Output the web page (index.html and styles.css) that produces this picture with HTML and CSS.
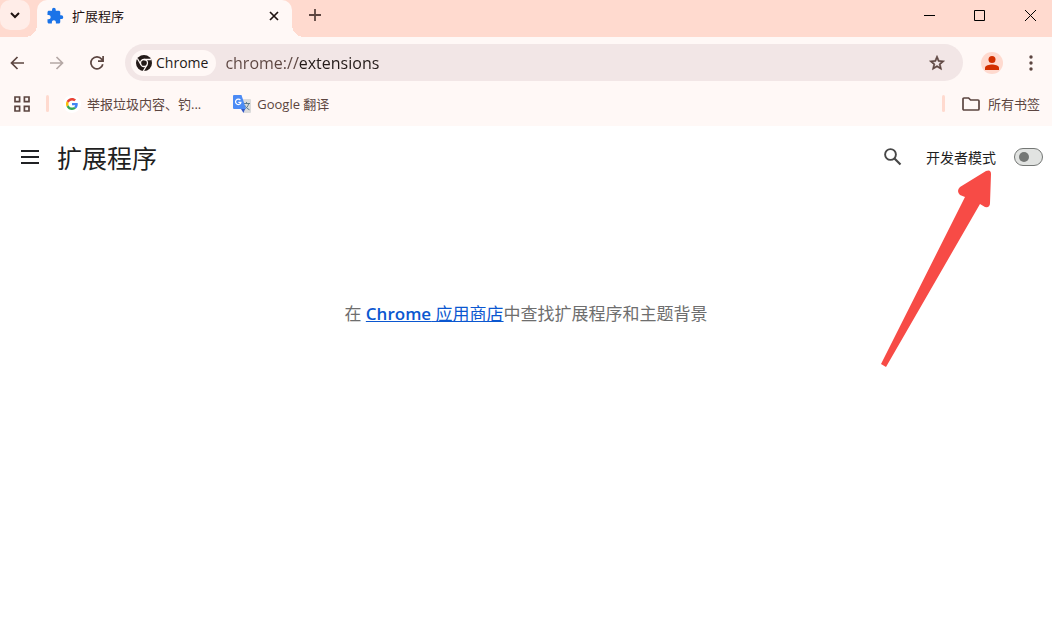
FILE: index.html
```html
<!DOCTYPE html>
<html lang="zh-CN">
<head>
    <meta charset="UTF-8">
    <meta name="viewport" content="width=device-width, initial-scale=1.0">
    <title>扩展程序</title>
    <link rel="stylesheet" href="styles.css">
</head>
<body>
    <!-- Tab strip -->
    <div class="tabstrip">
        <button class="tab-search" type="button" aria-label="搜索标签页">
            <svg width="12" height="12" viewBox="0 0 12 12"><path d="M2 4l4 4 4-4" fill="none" stroke="#1f1311" stroke-width="2"/></svg>
        </button>
        <div class="tab">
            <svg width="18" height="18" viewBox="0 0 24 24"><path fill="#1a73e8" d="M20.5 11H19V7c0-1.100-.9-2-2-2h-4V3.500a2.500 2.500 0 0 0-5 0V5H4c-1.100 0-1.990.9-1.990 2v3.800H3.500c1.490 0 2.700 1.210 2.700 2.700s-1.210 2.700-2.700 2.700H2V20c0 1.100.9 2 2 2h3.800v-1.500c0-1.490 1.210-2.700 2.700-2.700s2.700 1.210 2.700 2.700V22H17c1.100 0 2-.9 2-2v-4h1.500a2.500 2.500 0 0 0 0-5z"/></svg>
            <span class="tab-title">扩展程序</span>
            <button class="icon-button tab-close" type="button" aria-label="关闭">
                <svg width="10" height="10" viewBox="0 0 10 10"><path d="M1 1l8 8M9 1L1 9" stroke="#1f1311" stroke-width="1.700"/></svg>
            </button>
        </div>
        <button class="icon-button new-tab" type="button" aria-label="新标签页">
            <svg width="12" height="12" viewBox="0 0 12 12"><path d="M6 0v12M0 6h12" stroke="#5c4540" stroke-width="1.800"/></svg>
        </button>
        <div class="window-controls">
            <button type="button" aria-label="最小化">
                <svg width="11" height="11" viewBox="0 0 11 11"><path d="M0 5.500h11" stroke="#000"/></svg>
            </button>
            <button type="button" aria-label="最大化">
                <svg width="11" height="11" viewBox="0 0 11 11"><path d="M.5.5h10v10H.5z" fill="none" stroke="#000"/></svg>
            </button>
            <button type="button" aria-label="关闭窗口">
                <svg width="11" height="11" viewBox="0 0 11 11"><path d="M0 0l11 11M11 0L0 11" stroke="#000"/></svg>
            </button>
        </div>
    </div>

    <!-- Toolbar -->
    <div class="toolbar">
        <div class="nav-buttons">
            <button class="icon-button" type="button" aria-label="后退">
                <svg width="14" height="14" viewBox="0 0 14 14"><path d="M14 7H1.500M7.500 1l-6 6 6 6" fill="none" stroke="#5c4540" stroke-width="1.700"/></svg>
            </button>
            <button class="icon-button" type="button" aria-label="前进" disabled>
                <svg width="14" height="14" viewBox="0 0 14 14"><path d="M0 7h12.500M6.500 1l6 6-6 6" fill="none" stroke="#b5a8a5" stroke-width="1.700"/></svg>
            </button>
            <button class="icon-button" type="button" aria-label="重新加载">
                <svg width="14" height="14" viewBox="0 0 14 14"><path d="M12.800 8.200A6 6 0 1 1 11.700 3.200L13 4.600M13.100 0v5.200H8" fill="none" stroke="#5c4540" stroke-width="1.700"/></svg>
            </button>
        </div>
        <div class="omnibox">
            <button class="site-chip" type="button">
                <svg width="16" height="16" viewBox="0 0 16 16">
                    <circle cx="8" cy="8" r="8" fill="#231a18"/>
                    <circle cx="8" cy="8" r="3.500" fill="none" stroke="#fff8f6" stroke-width="1.300"/>
                    <path d="M8 4.500h7.200M4.970 9.750L1.400 3.500M11.030 9.750L7.400 16" stroke="#fff8f6" stroke-width="1.300"/>
                </svg>
                Chrome
            </button>
            <input class="url" type="text" value="chrome://extensions" aria-label="地址和搜索栏">
            <button class="icon-button" type="button" aria-label="为此标签页添加书签">
                <svg width="18" height="18" viewBox="0 0 24 24"><path fill="#5c4540" d="M22 9.240l-7.190-.62L12 2 9.190 8.630 2 9.240l5.460 4.730L5.820 21 12 17.270 18.180 21l-1.630-7.030L22 9.240zM12 15.400l-3.760 2.270 1-4.280-3.320-2.880 4.380-.38L12 6.100l1.710 4.040 4.380.38-3.320 2.880 1 4.280L12 15.400z" stroke="#5c4540" stroke-width=".8"/></svg>
            </button>
        </div>
        <button class="profile" type="button" aria-label="个人资料">
            <svg width="14" height="14" viewBox="0 0 14 14"><circle cx="7" cy="3.500" r="3.500" fill="#d33000"/><path fill="#d33000" d="M0 14v-2.200C0 9.300 4.500 8.400 7 8.400s7 .9 7 3.400V14z"/></svg>
        </button>
        <button class="icon-button menu" type="button" aria-label="菜单">
            <svg width="4" height="16" viewBox="0 0 4 16" fill="#5c4540"><circle cx="2" cy="2" r="1.700"/><circle cx="2" cy="8" r="1.700"/><circle cx="2" cy="14" r="1.700"/></svg>
        </button>
    </div>

    <!-- Bookmarks bar -->
    <div class="bookmarks">
        <button class="icon-button" type="button" aria-label="标签页分组">
            <svg width="16" height="16" viewBox="0 0 16 16"><path d="M1 1h4.600v4.600H1zM10.400 1H15v4.600h-4.600zM1 10.400h4.600V15H1zM10.400 10.400H15V15h-4.600z" fill="none" stroke="#5c4540" stroke-width="1.700"/></svg>
        </button>
        <span class="divider"></span>
        <a class="bookmark" href="#">
            <span class="favicon">
                <svg width="12" height="12" viewBox="0 0 48 48"><path fill="#ea4335" d="M24 9.500c3.540 0 6.710 1.220 9.210 3.600l6.850-6.850C35.900 2.380 30.470 0 24 0 14.620 0 6.510 5.380 2.560 13.220l7.980 6.190C12.430 13.720 17.740 9.500 24 9.500z"/><path fill="#4285f4" d="M46.980 24.550c0-1.570-.15-3.090-.38-4.550H24v9.020h12.940c-.58 2.960-2.260 5.480-4.780 7.180l7.730 6c4.510-4.180 7.090-10.360 7.090-17.650z"/><path fill="#fbbc05" d="M10.530 28.590c-.48-1.450-.76-2.990-.76-4.590s.27-3.140.76-4.590l-7.980-6.190C.92 16.460 0 20.120 0 24s.92 7.540 2.560 10.780l7.970-6.190z"/><path fill="#34a853" d="M24 48c6.480 0 11.930-2.130 15.890-5.810l-7.730-6c-2.150 1.450-4.920 2.300-8.160 2.300-6.260 0-11.570-4.220-13.470-9.910l-7.980 6.190C6.510 42.620 14.620 48 24 48z"/></svg>
            </span>
            举报垃圾内容、钓...
        </a>
        <a class="bookmark" href="#">
            <svg width="18" height="18" viewBox="0 0 18 18">
                <path fill="#dbdbdb" d="M7 4h10a1 1 0 0 1 1 1v12a1 1 0 0 1-1 1h-6z"/>
                <path d="M10 8.500h7M13.500 7v1.500M15.700 8.500c-.6 2.800-2.200 4.700-4.500 6M11.500 10c1 2 2.800 3.800 5 4.800" fill="none" stroke="#607d8b"/>
                <path fill="#3257c4" d="M8 14h4l-1.500 4z"/>
                <path fill="#4c8bf5" d="M1 0h7.500L13 14H1a1 1 0 0 1-1-1V1a1 1 0 0 1 1-1z"/>
                <path d="M7.400 5.200A2.700 2.700 0 1 0 7.900 7.300H5.400" fill="none" stroke="#fff" stroke-width="1.200"/>
            </svg>
            Google 翻译
        </a>
        <div class="all-bookmarks">
            <span class="divider"></span>
            <button class="bookmark" type="button">
                <svg width="18" height="14" viewBox="0 0 18 14"><path d="M2 1h4.600l2 2H16q1 0 1 1v8q0 1-1 1H2q-1 0-1-1V2q0-1 1-1z" fill="none" stroke="#5c4540" stroke-width="1.700"/></svg>
                所有书签
            </button>
        </div>
    </div>

    <!-- Extensions page -->
    <header class="page-header">
        <button class="icon-button" type="button" aria-label="主菜单">
            <svg width="18" height="14" viewBox="0 0 18 14"><path d="M0 1h18M0 7h18M0 13h18" stroke="#202124" stroke-width="2"/></svg>
        </button>
        <h1>扩展程序</h1>
        <button class="icon-button search" type="button" aria-label="搜索扩展程序">
            <svg width="18" height="18" viewBox="0 0 18 18"><circle cx="6.500" cy="6.500" r="5.400" fill="none" stroke="#474747" stroke-width="1.900"/><path d="M10.500 10.500l6 6" stroke="#474747" stroke-width="2.200"/></svg>
        </button>
        <label for="devMode">开发者模式</label>
        <input class="switch" type="checkbox" role="switch" id="devMode">
        <svg class="pointer" width="112" height="198" viewBox="0 0 112 198"><path fill="#f74b46" d="M106 2Q111 0 111 5L110 34Q110 39 105 38L100 35 6 198 1 195 85 28 80 26Q76 22 80 18Z"/></svg>
    </header>

    <main class="empty">
        <p>在 <a href="#"><span class="brand">Chrome</span> 应用商店</a>中查找扩展程序和主题背景</p>
    </main>
</body>
</html>
```

FILE: styles.css
```css
* {
    box-sizing: border-box;
}

body {
    margin: 0;
    min-height: 100vh;
    background-color: #ffffff;
    color: #1f1f1f;
    font-family: "Open Sans", "Noto Sans CJK SC", sans-serif;
    font-size: 13px;
}

button {
    padding: 0;
    border: none;
    background: none;
    color: inherit;
    font: inherit;
}

svg {
    display: block;
    flex: none;
}

.icon-button {
    display: flex;
    align-items: center;
    justify-content: center;
    width: 20px;
    height: 20px;
}

/* Tab strip */
.tabstrip {
    display: flex;
    height: 37px;
    background-color: #ffdacf;
}

.tab-search {
    display: flex;
    align-items: center;
    justify-content: center;
    width: 30px;
    height: 30px;
    margin-right: 7px;
    border-radius: 10px;
    background-color: #ffede8;
}

.tab {
    position: relative;
    display: flex;
    align-items: center;
    gap: 8px;
    width: 255px;
    padding: 0 8px 6px 9px;
    border-radius: 10px 10px 0 0;
    background-color: #fff8f6;
}

/* Curved feet of the active tab */
.tab::before,
.tab::after {
    content: "";
    position: absolute;
    bottom: 0;
    width: 12px;
    height: 12px;
}

.tab::before {
    right: 100%;
    background: radial-gradient(circle at 0 0, transparent 12px, #fff8f6 12px);
}

.tab::after {
    left: 100%;
    background: radial-gradient(circle at 100% 0, transparent 12px, #fff8f6 12px);
}

.tab-title {
    flex: 1;
    color: #1f1311;
}

.new-tab {
    height: 30px;
    margin-left: 13px;
}

.window-controls {
    display: flex;
    margin-left: auto;
}

.window-controls button {
    display: flex;
    align-items: center;
    justify-content: center;
    width: 50px;
    height: 31px;
}

.window-controls button:last-child {
    width: 44px;
    margin-left: 4px;
}

/* Toolbar */
.toolbar {
    display: flex;
    align-items: center;
    padding: 7px 11px 0 7px;
    background-color: #fff8f6;
}

.nav-buttons {
    display: flex;
    gap: 20px;
    margin-right: 18px;
}

.omnibox {
    display: flex;
    flex: 1;
    align-items: center;
    height: 37px;
    padding: 0 16px 0 6px;
    border-radius: 19px;
    background-color: #f2e6e6;
}

.site-chip {
    display: flex;
    align-items: center;
    gap: 4px;
    height: 26px;
    padding: 0 8px 0 5px;
    border-radius: 13px;
    background-color: #fff8f6;
    color: #231a18;
    font-size: 14px;
}

/* The scheme is drawn lighter than the host */
.url {
    flex: 1;
    min-width: 0;
    margin-left: 9px;
    padding: 0;
    border: none;
    outline: none;
    background: linear-gradient(to right, #5c4540 73px, #231a18 73px);
    -webkit-background-clip: text;
    background-clip: text;
    -webkit-text-fill-color: transparent;
    font: inherit;
    font-size: 16px;
}

.profile {
    display: flex;
    align-items: center;
    justify-content: center;
    width: 22px;
    height: 22px;
    margin: 0 18px;
    border-radius: 50%;
    background-color: #ffdacf;
}

/* Bookmarks bar */
.bookmarks {
    display: flex;
    align-items: center;
    height: 45px;
    padding: 0 12px;
    background-color: #fff8f6;
    color: #5c4540;
}

.divider {
    width: 3px;
    height: 17px;
    margin-left: 14px;
    border-radius: 2px;
    background-color: #ffdacf;
}

.bookmark {
    display: flex;
    align-items: center;
    gap: 6px;
    margin-left: 32px;
    color: inherit;
    text-decoration: none;
}

.favicon {
    display: flex;
    align-items: center;
    justify-content: center;
    width: 18px;
    height: 18px;
    border-radius: 50%;
    background-color: #ffffff;
}

.divider + .bookmark {
    margin-left: 14px;
}

.all-bookmarks {
    display: flex;
    align-items: center;
    margin-left: auto;
}

.all-bookmarks .bookmark {
    gap: 8px;
    margin-left: 17px;
}

/* Page header */
.page-header {
    position: relative;
    display: flex;
    align-items: center;
    height: 61px;
    padding: 0 9px 0 20px;
}

.page-header h1 {
    margin: 0 0 0 17px;
    font-size: 25px;
    font-weight: 400;
}

.search {
    margin-left: auto;
    margin-right: 23px;
}

.page-header label {
    margin-right: 18px;
    font-size: 14px;
}

.switch {
    display: flex;
    align-items: center;
    appearance: none;
    width: 29px;
    height: 18px;
    margin: 0;
    padding: 0 4px;
    border: 1px solid #747775;
    border-radius: 9px;
    background-color: #e1e3e1;
}

.switch::before {
    content: "";
    width: 10px;
    height: 10px;
    border-radius: 50%;
    background-color: #747775;
}

/* Red arrow pointing at the developer mode switch */
.pointer {
    position: absolute;
    top: 43px;
    right: 60px;
}

/* Empty list message */
.empty {
    padding: 113px 20px 0;
    text-align: center;
    color: #6e6e6e;
    font-size: 17px;
}

.empty p {
    margin: 0;
}

.empty a {
    color: #0b57d0;
}

.brand {
    font-weight: 600;
}
```
